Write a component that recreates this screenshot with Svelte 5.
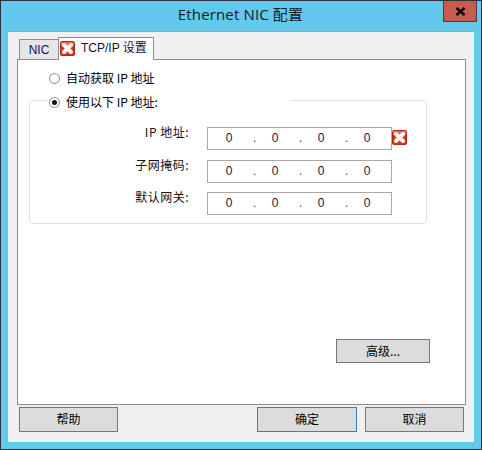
<script>
	const fields = [
		{ label: 'IP 地址:', error: true },
		{ label: '子网掩码:', error: false },
		{ label: '默认网关:', error: false }
	];
	const octets = ['0', '0', '0', '0'];
</script>

{#snippet errorIcon(cls)}
	<svg class={cls} viewBox="0 0 15 15" width="15" height="15" aria-hidden="true">
		<rect x="0.5" y="0.5" width="14" height="14" rx="1.5" fill="#d8341a" stroke="#a82a14" />
		<path d="M1 1h13v4H1z" fill="#ee6a4a" />
		<path d="M4 4l7 7M11 4l-7 7" stroke="#fdf6f2" stroke-width="4" stroke-linecap="round" />
	</svg>
{/snippet}

<div class="window">
	<header class="titlebar">
		<span class="title">Ethernet NIC 配置</span>
		<button class="close" aria-label="关闭">
			<svg viewBox="0 0 11 9" width="11" height="9">
				<path d="M1.5 1l8 7M9.5 1l-8 7" stroke="#000" stroke-width="2.4" />
			</svg>
		</button>
	</header>

	<div class="client">
		<div class="tabs">
			<div class="tab">NIC</div>
			<div class="tab active">
				{@render errorIcon('tab-icon')}
				<span>TCP/IP 设置</span>
			</div>
		</div>

		<div class="panel">
			<label class="radio first">
				<span class="dot"></span>
				<span class="text">自动获取 IP 地址</span>
			</label>

			<div class="group">
				<label class="radio legend">
					<span class="dot checked"></span>
					<span class="text">使用以下 IP 地址:</span>
				</label>
				{#each fields as field}
					<div class="row">
						<div class="label">{field.label}</div>
						<div class="ip">
							{#each octets as octet, i}
								<span class="octet">{octet}</span>
								{#if i < 3}<span class="sep">.</span>{/if}
							{/each}
						</div>
						{#if field.error}
							{@render errorIcon('field-icon')}
						{/if}
					</div>
				{/each}
			</div>

			<div class="advanced">
				<button class="btn adv">高级...</button>
			</div>
		</div>

		<div class="footer">
			<button class="btn">帮助</button>
			<div class="spacer"></div>
			<button class="btn default">确定</button>
			<button class="btn">取消</button>
		</div>
	</div>
</div>

<style>
	:global(body) {
		margin: 0;
	}
	.window {
		width: 482px;
		height: 450px;
		box-sizing: border-box;
		border: 1px solid #2c3338;
		background: #63c9ec;
		display: flex;
		flex-direction: column;
		font-family: "Noto Sans CJK SC", "Liberation Sans", sans-serif;
		font-size: 12px;
		color: #000;
		overflow: hidden;
	}
	.titlebar {
		height: 29px;
		flex: none;
		position: relative;
		display: flex;
		justify-content: center;
		align-items: center;
		box-sizing: border-box;
		padding-bottom: 4px;
	}
	.title {
		font-family: "Open Sans", "Noto Sans CJK SC", sans-serif;
		font-size: 15px;
		letter-spacing: 0.15px;
		color: #10202a;
		margin-left: -1px;
	}
	.close {
		position: absolute;
		top: -1px;
		right: 4px;
		width: 34px;
		height: 22px;
		box-sizing: border-box;
		border: 1px solid #4d3a38;
		background: #c75b50;
		padding: 0;
		display: flex;
		align-items: center;
		justify-content: center;
	}
	.client {
		flex: 1;
		margin: 1px 7px 7px 7px;
		background: #f0f0f0;
		border-top: 1px solid #8fa3b3;
		padding: 0 8px 0 9px;
		display: flex;
		flex-direction: column;
		min-height: 0;
	}
	.tabs {
		height: 28px;
		flex: none;
		display: flex;
		align-items: flex-end;
		padding-left: 2px;
		margin-bottom: -1px;
		position: relative;
		z-index: 1;
	}
	.tab {
		box-sizing: border-box;
		height: 20px;
		width: 39px;
		margin-bottom: 1px;
		border: 1px solid #8c8c96;
		border-bottom: none;
		border-right: none;
		background: #e6e6e6;
		font-family: "Liberation Sans", sans-serif;
		font-size: 12px;
		color: #101060;
		text-align: center;
		line-height: 20px;
	}
	.tab.active {
		width: 96px;
		height: 23px;
		margin-bottom: 0;
		border-right: 1px solid #8c8c96;
		background: #fff;
		display: flex;
		align-items: center;
		gap: 6px;
		padding-left: 1px;
		padding-bottom: 2px;
		line-height: 1;
		color: #10103a;
		font-family: "Liberation Sans", "Noto Sans CJK SC", sans-serif;
	}
	.tab-icon {
		flex: none;
	}
	.panel {
		box-sizing: border-box;
		height: 346px;
		flex: none;
		border: 1px solid #8c8c96;
		background: #fff;
		padding: 0 38px 0 11px;
		display: flex;
		flex-direction: column;
	}
	.radio {
		display: flex;
		align-items: center;
		gap: 6px;
		height: 16px;
		font-size: 12px;
		line-height: 16px;
	}
	.radio.first {
		margin: 10px 0 0 20px;
	}
	.text {
		margin-top: -1px;
	}
	.dot {
		width: 11px;
		height: 11px;
		box-sizing: border-box;
		border: 1px solid #8a8a8a;
		border-radius: 50%;
		background: #fff;
		flex: none;
		display: flex;
		align-items: center;
		justify-content: center;
	}
	.dot.checked::after {
		content: "";
		width: 5px;
		height: 5px;
		border-radius: 50%;
		background: #111;
	}
	.group {
		position: relative;
		box-sizing: border-box;
		height: 124px;
		margin-top: 14px;
		border: 1px solid #dbe1e8;
		border-radius: 4px;
		padding-top: 26px;
	}
	.legend {
		position: absolute;
		top: -7px;
		left: 19px;
		width: 242px;
		background: #fff;
		box-sizing: border-box;
	}
	.row {
		display: flex;
		align-items: flex-start;
		height: 32.5px;
	}
	.label {
		width: 161px;
		box-sizing: border-box;
		padding-right: 2px;
		flex: none;
		text-align: right;
		line-height: 16px;
		margin-top: -1px;
		color: #111;
		letter-spacing: 0.5px;
		transform: translateY(-2px);
	}
	.ip {
		margin-left: 16px;
		width: 185px;
		height: 23px;
		box-sizing: border-box;
		border: 1px solid #a8a8a8;
		display: grid;
		grid-template-columns: 42px 4px 42px 4px 42px 4px 42px;
		align-items: center;
		font-family: "Liberation Sans", sans-serif;
		font-size: 12px;
		color: #1a1a3a;
	}
	.octet {
		text-align: center;
		line-height: 21px;
	}
	.sep {
		color: #5a1a6a;
		padding-left: 3px;
		line-height: 21px;
	}
	.field-icon {
		margin-top: 3px;
		flex: none;
	}
	.advanced {
		display: flex;
		justify-content: flex-end;
		margin-top: 115px;
		margin-right: -3px;
	}
	.btn {
		box-sizing: border-box;
		width: 99px;
		height: 25px;
		border: 1px solid #777;
		background: #dcdcdc;
		font: inherit;
		font-size: 12px;
		color: #000;
		padding: 0 0 2px;
	}
	.btn.adv {
		width: 94px;
		height: 24px;
	}
	.btn.default {
		width: 100px;
		border-color: #3c7fb1;
		margin-right: 8px;
	}
	.footer {
		display: flex;
		margin-top: 2px;
		padding-left: 2px;
		padding-right: 2px;
	}
	.spacer {
		flex: 1;
	}
</style>
